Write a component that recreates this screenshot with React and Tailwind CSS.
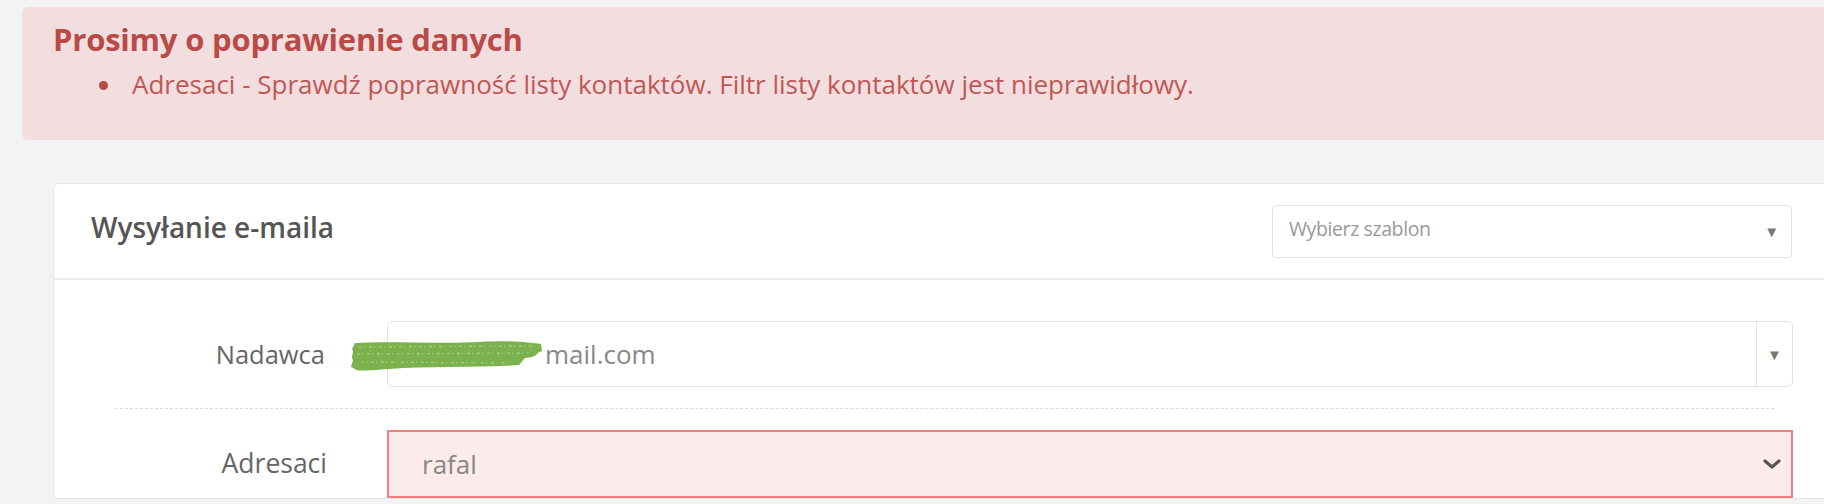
import React from "react";

const font = { fontFamily: '"Open Sans", "Noto Sans", sans-serif' };

const Scribble = () => (
  <svg width="196" height="30" viewBox="0 0 196 30" className="absolute left-[-39px] top-[19px]">
    <path
      d="M6 2 C40 0, 90 3, 130 1 S180 2, 192 3 L193 10 C186 12, 190 16, 176 17 L170 24 C130 27, 80 25, 40 28 S10 29, 2 26 L4 19 C1 15, 6 12, 3 8 Z"
      fill="#7cb24e"
    />
    <path d="M10 6 L188 5 M8 13 L180 12 M12 21 L160 22" stroke="#a9d283" strokeWidth="1.2" strokeDasharray="3 2 1 4" />
  </svg>
);

const Caret = () => (
  <span className="text-[#777] text-[15px] leading-none">▼</span>
);

export default function App() {
  return (
    <div className="w-full h-[504px] overflow-hidden bg-[#f3f3f3]" style={font}>
      <div className="pl-[22px] pt-[7px] w-[1860px]">
        <div className="h-[133px] rounded-[6px] bg-[#f2dede] pl-[31px] pt-[12px]">
          <h2 className="text-[31px] font-bold text-[#b94a48] leading-[40px] tracking-[-0.2px]">Prosimy o poprawienie danych</h2>
          <ul className="mt-[8px] pl-[71px] list-disc text-[#c05755] text-[26px] leading-[34px] marker:text-[#b94a48]">
            <li className="pl-[8px]">Adresaci - Sprawdź poprawność listy kontaktów. Filtr listy kontaktów jest nieprawidłowy.</li>
          </ul>
        </div>

        <div className="ml-[31px] mt-[43px] bg-white border border-[#e6e6e6] rounded-tl-[6px]">
          <div className="h-[96px] border-b-2 border-[#ececec] flex items-center pl-[37px]">
            <h3 className="w-[1181px] text-[28px] font-semibold text-[#555] pb-[8px]">Wysyłanie e-maila</h3>
            <div className="w-[520px] h-[53px] border border-[#e3e3e3] rounded-[4px] flex items-center pl-[16px] pr-[12px] justify-between">
              <span className="text-[19.5px] text-[#999] tracking-[-0.4px] pb-[4px]">Wybierz szablon</span>
              <Caret />
            </div>
          </div>

          <div className="pt-[41px] pl-[61px] pr-[32px]">
            <div className="flex items-center">
              <label className="w-[210px] text-right text-[25.5px] text-[#666]">Nadawca</label>
              <div className="ml-[62px] w-[1406px] h-[66px] border border-[#e3e3e3] rounded-[5px] flex items-center relative">
                <Scribble />
                <span className="flex-1 pl-[157px] text-[26px] text-[#888]">mail.com</span>
                <div className="w-[36px] h-full border-l border-[#e3e3e3] flex items-center justify-center">
                  <Caret />
                </div>
              </div>
            </div>

            <div className="my-[21px] w-[1659px] border-t border-dashed border-[#dcdcdc]" />

            <div className="flex items-center">
              <label className="w-[212px] text-right text-[26.5px] text-[#666]">Adresaci</label>
              <div className="ml-[60px] w-[1406px] h-[68px] border-2 border-[#f08080] bg-[#fdeaea] flex items-center justify-between pl-[33px] pr-[8px]">
                <span className="text-[26px] text-[#888]">rafal</span>
                <svg width="22" height="14" viewBox="0 0 22 14">
                  <path d="M4 4 L11 10 L18 4" fill="none" stroke="#555" strokeWidth="3.2" strokeLinecap="round" strokeLinejoin="round" />
                </svg>
              </div>
            </div>
          </div>
        </div>
      </div>
    </div>
  );
}
